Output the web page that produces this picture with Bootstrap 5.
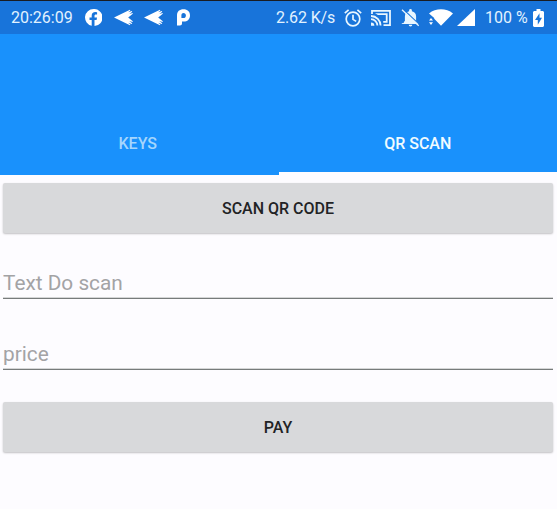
<!DOCTYPE html>
<html lang="en">
<head>
<meta charset="utf-8">
<meta name="viewport" content="width=device-width, initial-scale=1">
<title>QR Scan</title>
<link href="https://cdn.jsdelivr.net/npm/bootstrap@5.3.0/dist/css/bootstrap.min.css" rel="stylesheet">
<style>
body{font-family:Roboto,"Liberation Sans",sans-serif;background:#fdfcff;height:509px;overflow:hidden}
.status-bar{height:34px;background:#1874da;border-top:1px solid #191c22;padding:0 13px 0 11px;color:#e2f2ff;font-size:16px;line-height:33px}
.status-bar svg{display:block;flex:none;fill:#fff}
.status-left{gap:12px}
.status-right{gap:9px}
.clock{width:62px}
.speed{width:59px;letter-spacing:-.1px}
.percent{width:38px;margin-left:1px;margin-right:1px}
.bell-icon{margin-left:1px}
.plane-second{margin-left:-1px}
.p-icon{margin-left:2px}
.app-header{height:141px;background:#1991fc}
.app-tabs{height:62px}
.app-tabs .nav-link{color:#a5d6fd;font-size:16px;font-weight:500;line-height:24px;padding:19px 3px 0 0;border-radius:0;border-bottom:3px solid transparent}
.app-tabs .nav-link.active{color:#f0fbff;border-bottom-color:#fdfcff;padding-right:0}
.app-form{padding:8px 4px 0 3px}
.btn-raised{height:50px;background:#d8d9db;color:#222325;font-size:16px;font-weight:500;line-height:24px;border:0;border-radius:2px;box-shadow:0 1px 2px rgba(0,0,0,.24);padding:1px 0 0}
.line-input{height:35px;background:transparent;border:0;border-bottom:1px solid #777b7b;border-radius:0;padding:3px 0 0;font-size:20.8px;line-height:30px;box-shadow:0 -1px 0 #d5d6d7 inset}
.line-input::placeholder{color:#a3a3a5;opacity:1}
.first-field{margin-top:31px}
.second-field{margin-top:36px}
.pay-button{margin-top:32px}
</style>
<script src="https://cdn.jsdelivr.net/npm/bootstrap@5.3.0/dist/js/bootstrap.bundle.min.js"></script>
</head>
<body>
<header>
<div class="status-bar d-flex align-items-center justify-content-between text-nowrap">
<div class="status-left d-flex align-items-center">
<span class="clock">20:26:09</span>
<svg width="17" height="17" viewBox="0 0 17 17" aria-label="Facebook"><path d="M8.5 0a8.5 8.5 0 0 0-1.8 16.8v-5.7H4.5V8.4h2.2V6.7c0-2.4 1.4-3.7 3.6-3.7l1.8.2v2.2h-1.2c-1 0-1.4.6-1.4 1.3v1.7H12l-.4 2.7H9.5V17A8.5 8.5 0 0 0 8.5 0Z"/></svg>
<svg width="19" height="17" viewBox="0 0 19 17"><path d="M0 8.5 16 .7l.3.7-2.2 1.8 3.8-1.2.3.7-2.9 2.2 3.4-.8.1.7L14.2 8.5l4.6 3.7-.1.7-3.4-.8 2.9 2.2-.3.7-3.8-1.2 2.2 1.8-.3.7Z"/></svg>
<svg class="plane-second" width="19" height="17" viewBox="0 0 19 17"><path d="M0 8.5 16 .7l.3.7-2.2 1.8 3.8-1.2.3.7-2.9 2.2 3.4-.8.1.7L14.2 8.5l4.6 3.7-.1.7-3.4-.8 2.9 2.2-.3.7-3.8-1.2 2.2 1.8-.3.7Z"/></svg>
<svg class="p-icon" width="13" height="17" viewBox="0 0 13 17"><path fill-rule="evenodd" d="M0 6.5C0 2.5 2.5.3 6.5.3S13 2.7 13 6.4s-2.6 6.2-6.2 6.2H5v2c0 1.3-.8 2-2 2H0Zm4.4 2.6h2c1.6 0 2.5-1 2.5-2.6S8 3.9 6.5 3.9 4.4 4.8 4.4 6.3Z"/></svg>
</div>
<div class="status-right d-flex align-items-center">
<span class="speed">2.62 K/s</span>
<svg width="18" height="18" viewBox="0 0 18 18"><g fill="none" stroke="#e8f6ff" stroke-width="1.7"><circle cx="9" cy="10" r="6.8"/><path d="M9 5.8v4.6l3.2 2M.8 4.1 4.6.9M17.2 4.1 13.4.9"/></g></svg>
<svg width="20" height="16" viewBox="0 0 20 16"><g fill="none" stroke="#e8f6ff" stroke-width="1.8"><path d="M1 4V.9h18v14.2h-6.5M0 6a9.6 9.6 0 0 1 9.6 9.6M0 9.2a6.4 6.4 0 0 1 6.4 6.4"/></g><path fill="#e8f6ff" d="M0 12.4a3.4 3.4 0 0 1 3.4 3.4H0ZM4 3.2h12.6v9.6H12.2v-1.8H14.8V5H7Z"/></svg>
<svg class="bell-icon" width="19" height="18" viewBox="0 0 19 18"><path fill="#e8f6ff" d="M2.8 14v-1l1.1-1V7.5c0-2.8 1.5-4.6 4.2-5.2V1.4a1.4 1.4 0 0 1 2.8 0v.9c2.7.6 4.2 2.4 4.2 5.2V12l2.4 2.3v.7H.8v-.7ZM7.7 15.8h3.6a1.8 1.8 0 0 1-3.6 0Z"/><path d="M2.1.1 18.6 15.6" stroke="#1874da" stroke-width="1.1"/><path d="M1 .7 17.7 16.8" stroke="#e8f6ff" stroke-width="1.3"/></svg>
<div class="d-flex gap-1">
<svg width="24" height="17" viewBox="0 0 24 17"><path d="M0 4.4C6.8-1.2 17.2-1.2 24 4.4L12 16.8 5.2 9.8V9L0 4.4Z"/><path d="m0 11.4 2-2.5 2 2.5ZM0 13.3h4l-2 2.8Z"/></svg>
<svg width="18" height="17" viewBox="0 0 18 17"><path d="M18 0v17H0Z"/></svg>
</div>
<span class="percent">100 %</span>
<svg width="11" height="18" viewBox="0 0 11 18"><path d="M3.5 0h4v2H10l1 1v14l-1 1H1l-1-1V3l1-1h2.5Z"/><path fill="#1874da" d="M6.5 4.3 2 11h2.8v4.8L9 8.8H6.5Z"/></svg>
</div>
</div>
<div class="app-header d-flex flex-column justify-content-end">
<nav class="app-tabs nav nav-fill flex-nowrap">
<a class="nav-link w-50" href="#">KEYS</a>
<a class="nav-link w-50 active" href="#" aria-current="page">QR SCAN</a>
</nav>
</div>
</header>
<main class="app-form">
<button class="btn btn-raised w-100 d-block" type="button">SCAN QR CODE</button>
<input class="form-control line-input first-field" type="text" placeholder="Text Do scan" aria-label="Text Do scan">
<input class="form-control line-input second-field" type="text" placeholder="price" aria-label="price">
<button class="btn btn-raised w-100 d-block pay-button" type="button">PAY</button>
</main>
</body>
</html>
